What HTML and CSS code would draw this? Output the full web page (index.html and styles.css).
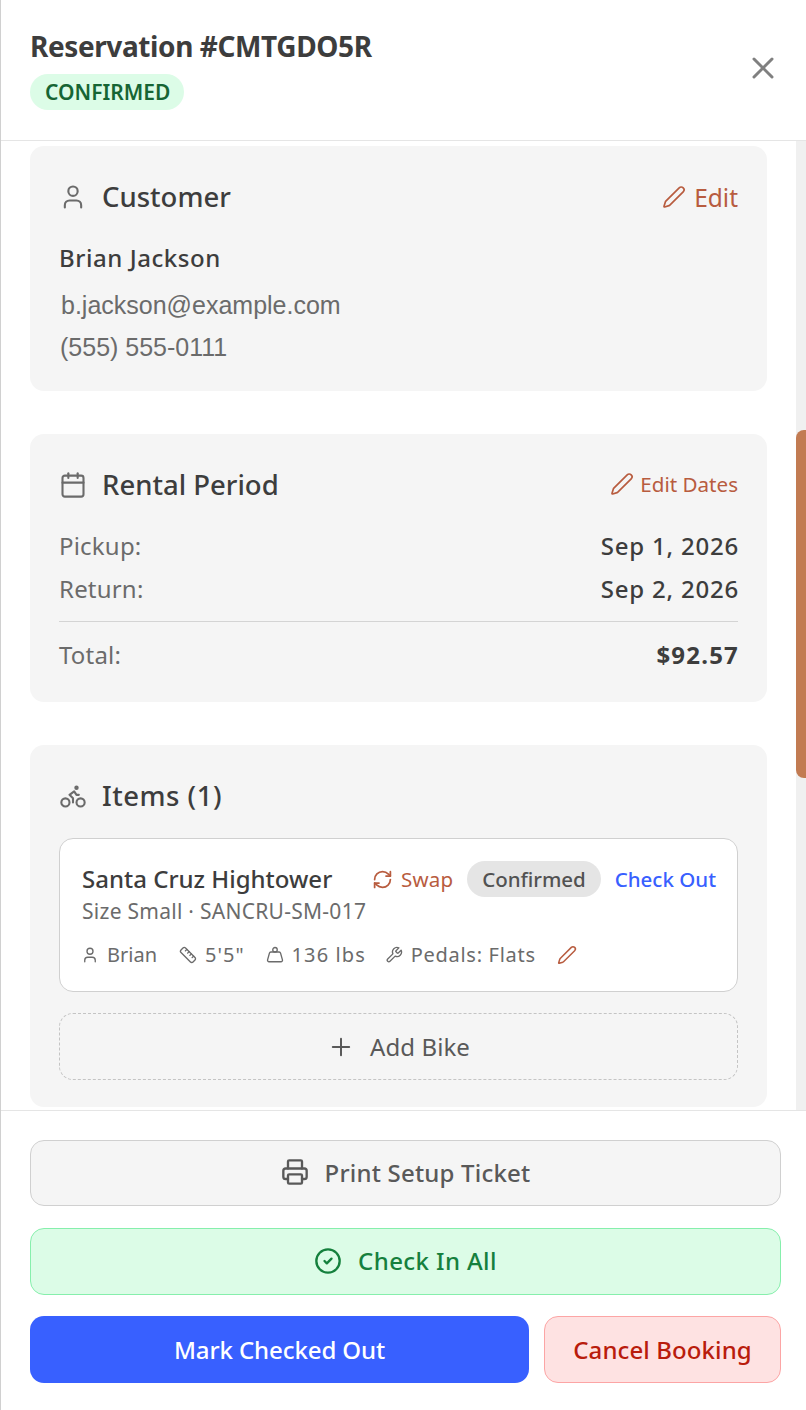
FILE: index.html
```html
<!DOCTYPE html>
<html lang="en">
<head>
<meta charset="utf-8">
<title>Reservation #CMTGDO5R</title>
<link rel="stylesheet" href="styles.css">
</head>
<body>
<div class="drawer">
  <header class="head">
    <div class="head-text">
      <h1 class="title">Reservation #CMTGDO5R</h1>
      <span class="status">CONFIRMED</span>
    </div>
    <svg class="ico close" viewBox="0 0 24 24"><path d="M18 6 6 18"/><path d="m6 6 12 12"/></svg>
  </header>
  <div class="body">
    <main class="scroll">
      <section class="card c1">
        <div class="card-head">
          <div class="card-title">
            <svg class="ico sec" viewBox="0 0 24 24"><path d="M19 21v-2a4 4 0 0 0-4-4H9a4 4 0 0 0-4 4v2"/><circle cx="12" cy="7" r="4"/></svg>
            <h2>Customer</h2>
          </div>
          <a class="edit big"><svg class="ico" viewBox="0 0 24 24"><path d="M21.174 6.812a1 1 0 0 0-3.986-3.987L3.842 16.174a2 2 0 0 0-.5.83l-1.321 4.352a.5.5 0 0 0 .623.622l4.353-1.32a2 2 0 0 0 .83-.497z"/></svg>Edit</a>
        </div>
        <div class="cust-name">Brian Jackson</div>
        <div class="contact first">b.jackson@example.com</div>
        <div class="contact">(555) 555-0111</div>
      </section>

      <section class="card c2">
        <div class="card-head">
          <div class="card-title">
            <svg class="ico sec" viewBox="0 0 24 24"><path d="M8 2v4"/><path d="M16 2v4"/><rect x="3" y="4" width="18" height="18" rx="2"/><path d="M3 10h18"/></svg>
            <h2>Rental Period</h2>
          </div>
          <a class="edit"><svg class="ico" viewBox="0 0 24 24"><path d="M21.174 6.812a1 1 0 0 0-3.986-3.987L3.842 16.174a2 2 0 0 0-.5.83l-1.321 4.352a.5.5 0 0 0 .623.622l4.353-1.32a2 2 0 0 0 .83-.497z"/></svg>Edit Dates</a>
        </div>
        <div class="kv kv1"><span>Pickup:</span><b>Sep 1, 2026</b></div>
        <div class="kv kv2"><span>Return:</span><b>Sep 2, 2026</b></div>
        <div class="kv total"><span>Total:</span><b>$92.57</b></div>
      </section>

      <section class="card c3">
        <div class="card-head">
          <div class="card-title">
            <svg class="ico sec" viewBox="0 0 24 24"><circle cx="18.5" cy="17.5" r="3.5"/><circle cx="5.5" cy="17.5" r="3.5"/><circle cx="15" cy="5" r="1"/><path d="M12 17.5V14l-3-3 4-3 2 3h2"/></svg>
            <h2 class="items-title">Items (1)</h2>
          </div>
        </div>
        <article class="item">
          <div class="item-top">
            <div class="item-name">Santa Cruz Hightower</div>
            <div class="item-actions">
              <a class="swap"><svg class="ico" viewBox="0 0 24 24"><path d="M3 12a9 9 0 0 1 9-9 9.75 9.75 0 0 1 6.74 2.74L21 8"/><path d="M21 3v5h-5"/><path d="M21 12a9 9 0 0 1-9 9 9.75 9.75 0 0 1-6.74-2.74L3 16"/><path d="M8 16H3v5"/></svg>Swap</a>
              <span class="pill">Confirmed</span>
              <a class="checkout">Check Out</a>
            </div>
          </div>
          <div class="item-sub">Size Small · SANCRU-SM-017</div>
          <div class="meta">
            <span class="m-rider"><svg class="ico" viewBox="0 0 24 24"><path d="M19 21v-2a4 4 0 0 0-4-4H9a4 4 0 0 0-4 4v2"/><circle cx="12" cy="7" r="4"/></svg>Brian</span>
            <span class="m-height"><svg class="ico" viewBox="0 0 24 24"><path d="M21.3 15.3a2.4 2.4 0 0 1 0 3.4l-2.6 2.6a2.4 2.4 0 0 1-3.4 0L2.7 8.7a2.41 2.41 0 0 1 0-3.4l2.6-2.6a2.41 2.41 0 0 1 3.4 0Z"/><path d="m14.5 12.5 2-2"/><path d="m11.5 9.5 2-2"/><path d="m8.5 6.5 2-2"/><path d="m17.5 15.5 2-2"/></svg>5'5"</span>
            <span class="m-weight"><svg class="ico" viewBox="0 0 24 24"><circle cx="12" cy="5" r="3"/><path d="M6.5 8a2 2 0 0 0-1.905 1.46L2.1 18.5A2 2 0 0 0 4 21h16a2 2 0 0 0 1.925-2.54L19.4 9.5A2 2 0 0 0 17.48 8Z"/></svg>136 lbs</span>
            <span class="m-pedals"><svg class="ico" viewBox="0 0 24 24"><path d="M14.7 6.3a1 1 0 0 0 0 1.4l1.6 1.6a1 1 0 0 0 1.4 0l3.77-3.77a6 6 0 0 1-7.94 7.94l-6.91 6.91a2.12 2.12 0 0 1-3-3l6.91-6.91a6 6 0 0 1 7.94-7.94l-3.76 3.76z"/></svg>Pedals: Flats</span>
            <svg class="ico meta-edit" viewBox="0 0 24 24"><path d="M21.174 6.812a1 1 0 0 0-3.986-3.987L3.842 16.174a2 2 0 0 0-.5.83l-1.321 4.352a.5.5 0 0 0 .623.622l4.353-1.32a2 2 0 0 0 .83-.497z"/></svg>
          </div>
        </article>
        <button class="add-bike"><svg class="ico" viewBox="0 0 24 24"><path d="M5 12h14"/><path d="M12 5v14"/></svg>Add Bike</button>
      </section>
    </main>
    <div class="scrollbar"><div class="thumb"></div></div>
  </div>
  <footer class="foot">
    <button class="btn print"><svg class="ico" viewBox="0 0 24 24"><path d="M6 18H4a2 2 0 0 1-2-2v-5a2 2 0 0 1 2-2h16a2 2 0 0 1 2 2v5a2 2 0 0 1-2 2h-2"/><path d="M6 9V3a1 1 0 0 1 1-1h10a1 1 0 0 1 1 1v6"/><rect x="6" y="14" width="12" height="8" rx="1"/></svg>Print Setup Ticket</button>
    <button class="btn checkin"><svg class="ico" viewBox="0 0 24 24"><circle cx="12" cy="12" r="10"/><path d="m9 12 2 2 4-4"/></svg>Check In All</button>
    <div class="btn-row">
      <button class="btn primary">Mark Checked Out</button>
      <button class="btn cancel">Cancel Booking</button>
    </div>
  </footer>
</div>
</body>
</html>
```

FILE: styles.css
```css
* { box-sizing: border-box; }
html, body { margin: 0; height: 100%; }
body { font-family: "Noto Sans", sans-serif; color: #3d3d3d; background: #fff; }
a { text-decoration: none; }
h1, h2 { margin: 0; }
.ico { fill: none; stroke: currentColor; stroke-width: 2; stroke-linecap: round; stroke-linejoin: round; flex: none; display: block; }

.drawer { width: 806px; height: 1410px; display: flex; flex-direction: column; border-left: 1px solid #d0d0d0; overflow: hidden; }

.head { height: 141px; flex: none; border-bottom: 1px solid #e5e5e5; display: flex; justify-content: space-between; align-items: center; padding: 0 25px 0 29px; }
.head-text { display: flex; flex-direction: column; align-items: flex-start; padding-bottom: 3px; }
.title { font-size: 28px; font-weight: 700; line-height: 38px; letter-spacing: -0.4px; color: #3d3d3d; }
.status { margin-top: 9px; height: 36px; padding: 0 14px 0 15px; border-radius: 18px; background: #dcfce7; color: #166534; font-size: 21px; font-weight: 600; line-height: 36px; }
.close { width: 36px; height: 36px; color: #808080; margin-top: -4px; }

.body { flex: 1; min-height: 0; display: flex; }
.scroll { flex: 1; min-width: 0; overflow: hidden; padding: 5px 29px 0 29px; display: flex; flex-direction: column; gap: 43px; }
.scrollbar { width: 10px; flex: none; background: #f0f0f0; padding-top: 289px; }
.thumb { height: 348px; background: #c27b52; border-radius: 8px 0 0 8px; }

.card { flex: none; background: #f5f5f5; border-radius: 14px; padding: 29px 29px 27px; }
.c2 { padding-bottom: 30px; }
.card-head { display: flex; justify-content: space-between; align-items: center; height: 44px; }
.card-title { display: flex; align-items: center; gap: 15px; }
.card-title h2 { font-size: 27.5px; font-weight: 500; line-height: 44px; color: #3d3d3d; }
.card-title .items-title { letter-spacing: 0.5px; }
.sec { width: 28px; height: 28px; color: #6b6b6b; stroke-width: 1.8; }

.edit { display: flex; align-items: center; gap: 6px; padding-bottom: 2px; color: #b85c3f; font-size: 20.6px; }
.edit .ico { width: 24px; height: 24px; stroke-width: 1.7; }
.edit.big { font-size: 24.5px; gap: 8px; padding-bottom: 0; }
.edit.big .ico { width: 24px; height: 24px; }

.cust-name { font-size: 24px; font-weight: 500; line-height: 34px; letter-spacing: 0.55px; margin-top: 22px; }
.contact { font-family: "Liberation Sans", sans-serif; font-size: 25px; line-height: 34px; color: #6b6b6b; margin-left: 2px; }
.contact.first { margin-top: 13px; }
.contact + .contact { margin-top: 8px; margin-left: 1px; }

.kv { display: flex; justify-content: space-between; font-size: 24px; line-height: 34px; color: #6b6b6b; }
.kv span { letter-spacing: 0.2px; }
.kv b { font-weight: 500; color: #3d3d3d; letter-spacing: 0.8px; margin-right: -1px; }
.kv1 { margin-top: 22px; }
.kv2 { margin-top: 9px; }
.total { margin-top: 15px; padding-top: 16px; border-top: 1px solid #d4d4d4; }
.total b { font-weight: 700; letter-spacing: 1.2px; }

.item { margin-top: 20px; height: 154px; background: #fff; border: 1px solid #d0d0d0; border-radius: 14px; padding: 22px 21px 0 22px; }
.item-top { display: flex; justify-content: space-between; align-items: center; height: 36px; margin-top: -1px; }
.item-name { font-size: 24px; font-weight: 500; }
.item-actions { display: flex; align-items: center; gap: 14px; margin-top: 2px; font-size: 20.5px; }
.swap { display: flex; align-items: center; gap: 8px; color: #b85c3f; letter-spacing: 0.2px; }
.swap .ico { width: 21px; height: 21px; }
.pill { height: 36px; padding: 0 15px 0 15px; border-radius: 18px; background: #e5e5e5; color: #525252; font-weight: 500; line-height: 36px; letter-spacing: -0.05px; }
.checkout { color: #3860ff; font-weight: 500; }
.item-sub { font-size: 21px; line-height: 28px; letter-spacing: 0.27px; color: #6b6b6b; margin-top: 1px; }
.meta { display: flex; align-items: center; gap: 21px; margin-top: 16px; margin-left: -1px; font-size: 20px; line-height: 28px; color: #6b6b6b; }
.meta span { display: flex; align-items: center; gap: 8px; }
.meta .m-height { letter-spacing: 1px; margin-left: 1px; }
.meta .m-weight { letter-spacing: 1.1px; margin-right: -2px; }
.meta .m-pedals { letter-spacing: 0.7px; }
.meta .ico { width: 18px; height: 18px; stroke-width: 1.8; }
.meta .meta-edit { color: #b85c3f; width: 20px; height: 20px; }

.add-bike { margin-top: 21px; width: 100%; height: 67px; background: none; border: 1px dashed #c4c4c4; border-radius: 14px; display: flex; align-items: center; justify-content: center; gap: 15px; font: inherit; font-size: 24px; letter-spacing: 0.1px; color: #595959; }
.add-bike .ico { width: 28px; height: 28px; stroke-width: 1.7; }

.foot { flex: none; height: 300px; border-top: 1px solid #e5e5e5; padding: 29px 25px 0 29px; display: flex; flex-direction: column; gap: 22px; }
.btn { font: inherit; font-size: 24px; font-weight: 500; border-radius: 14px; display: flex; align-items: center; justify-content: center; gap: 16px; padding: 0 0 2px; }
.btn .ico { width: 28px; height: 28px; }
.print { height: 66px; background: #f5f5f5; border: 1px solid #d0d0d0; color: #595959; letter-spacing: 0.2px; }
.checkin { height: 67px; background: #dcfce7; border: 1px solid #86efac; color: #15803d; letter-spacing: 0.4px; }
.btn-row { display: flex; gap: 15px; height: 67px; margin-top: -1px; }
.btn-row .btn { padding-bottom: 0; }
.primary { flex: none; width: 499px; background: #3860ff; border: 0; color: #fff; letter-spacing: -0.1px; }
.cancel { flex: 1; background: #fee2e2; border: 1px solid #fca5a5; color: #b91c0c; letter-spacing: 0.1px; }
```
